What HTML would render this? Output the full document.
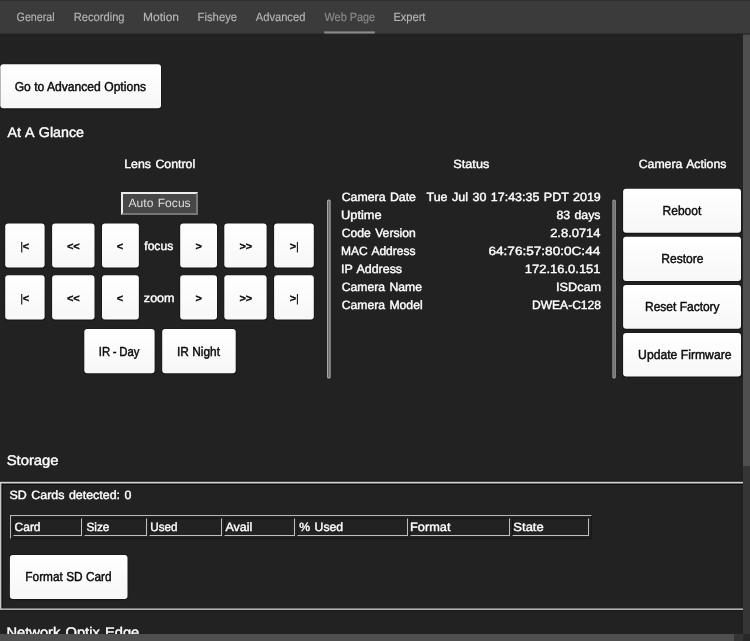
<!DOCTYPE html>
<html><head><meta charset="utf-8"><title>Camera Settings</title>
<style>
html,body{margin:0;padding:0;}
body{width:750px;height:641px;overflow:hidden;background:#222222;position:relative;font-family:"Liberation Sans",sans-serif;}
.t{position:absolute;white-space:nowrap;transform-origin:0 50%;text-rendering:geometricPrecision;}
#tx{position:absolute;left:0;top:0;width:750px;height:641px;will-change:transform;}
.g{position:absolute;width:40px;height:16px;line-height:16px;text-align:center;font-size:11px;font-weight:700;color:#0a0a0a;white-space:nowrap;letter-spacing:-0.3px;-webkit-text-stroke:0.3px;text-rendering:geometricPrecision;}
.g b{font-weight:400;-webkit-text-stroke:0.2px;}
#tabs{position:absolute;left:0;top:0;width:750px;height:33px;background:#3b3b3b;border-top:1px solid #303030;border-bottom:0;box-sizing:border-box;box-shadow:0 1px 0 #2e2e2e;}
#btns{position:absolute;left:0;top:0;}
#vs{position:absolute;left:743px;top:34px;width:7px;height:600px;background:#353535;}
#vt{position:absolute;left:743px;top:34.5px;width:7px;height:431px;background:#4f4f4f;}
#hs{position:absolute;left:0;top:633.5px;width:743px;height:8px;background:#353535;}
#ht{position:absolute;left:0;top:633.5px;width:733.5px;height:8px;background:#4f4f4f;}
#corner{position:absolute;left:743px;top:633.5px;width:7px;height:8px;background:#282828;}
#af{position:absolute;left:121px;top:192px;width:73px;height:18.5px;background:#474747;border:2px solid;border-color:#ececec #777 #777 #ececec;}
#sbox{position:absolute;left:0;top:478px;}
table#tb{position:absolute;left:10px;top:515px;border-collapse:separate;border-spacing:2px;border:1px solid;border-color:#b8b8b8 #161616 #161616 #b8b8b8;}
#tb td{padding:0;height:16px;border:1px solid;border-color:#141414 #c0c0c0 #c0c0c0 #141414;}
</style></head><body>
<div id="tabs"></div>
<svg id="btns" width="750" height="641" viewBox="0 0 750 641"><defs><linearGradient id="bg" x1="0" y1="0" x2="0" y2="1"><stop offset="0" stop-color="#ffffff"/><stop offset="1" stop-color="#f7f7f7"/></linearGradient></defs><rect x="9.10" y="554.30" width="119.20" height="46.00" rx="3.6" fill="#181818"/><rect x="622.30" y="332.30" width="119.50" height="45.70" rx="3.6" fill="#181818"/><rect x="622.30" y="284.30" width="119.50" height="45.85" rx="3.6" fill="#181818"/><rect x="622.30" y="236.20" width="119.50" height="46.10" rx="3.6" fill="#181818"/><rect x="622.30" y="188.20" width="119.50" height="46.00" rx="3.6" fill="#181818"/><rect x="161.40" y="328.40" width="75.10" height="46.20" rx="3.6" fill="#181818"/><rect x="83.50" y="328.40" width="71.90" height="46.20" rx="3.6" fill="#181818"/><rect x="273.30" y="274.70" width="41.30" height="46.20" rx="3.6" fill="#181818"/><rect x="273.30" y="222.80" width="41.30" height="46.20" rx="3.6" fill="#181818"/><rect x="223.50" y="274.70" width="43.90" height="46.20" rx="3.6" fill="#181818"/><rect x="223.50" y="222.80" width="43.90" height="46.20" rx="3.6" fill="#181818"/><rect x="179.40" y="274.70" width="38.40" height="46.20" rx="3.6" fill="#181818"/><rect x="179.40" y="222.80" width="38.40" height="46.20" rx="3.6" fill="#181818"/><rect x="101.20" y="274.70" width="38.45" height="46.20" rx="3.6" fill="#181818"/><rect x="101.20" y="222.80" width="38.45" height="46.20" rx="3.6" fill="#181818"/><rect x="51.30" y="274.70" width="44.00" height="46.20" rx="3.6" fill="#181818"/><rect x="51.30" y="222.80" width="44.00" height="46.20" rx="3.6" fill="#181818"/><rect x="4.40" y="274.70" width="41.00" height="46.20" rx="3.6" fill="#181818"/><rect x="4.40" y="222.80" width="41.00" height="46.20" rx="3.6" fill="#181818"/><rect x="-0.50" y="63.70" width="162.30" height="46.00" rx="3.6" fill="#181818"/><rect x="0.3" y="64.3" width="160.70" height="44.00" rx="3" fill="url(#bg)"/><rect x="5.2" y="223.4" width="39.40" height="44.20" rx="3" fill="url(#bg)"/><rect x="5.2" y="275.3" width="39.40" height="44.20" rx="3" fill="url(#bg)"/><rect x="52.1" y="223.4" width="42.40" height="44.20" rx="3" fill="url(#bg)"/><rect x="52.1" y="275.3" width="42.40" height="44.20" rx="3" fill="url(#bg)"/><rect x="102.0" y="223.4" width="36.85" height="44.20" rx="3" fill="url(#bg)"/><rect x="102.0" y="275.3" width="36.85" height="44.20" rx="3" fill="url(#bg)"/><rect x="180.2" y="223.4" width="36.80" height="44.20" rx="3" fill="url(#bg)"/><rect x="180.2" y="275.3" width="36.80" height="44.20" rx="3" fill="url(#bg)"/><rect x="224.3" y="223.4" width="42.30" height="44.20" rx="3" fill="url(#bg)"/><rect x="224.3" y="275.3" width="42.30" height="44.20" rx="3" fill="url(#bg)"/><rect x="274.1" y="223.4" width="39.70" height="44.20" rx="3" fill="url(#bg)"/><rect x="274.1" y="275.3" width="39.70" height="44.20" rx="3" fill="url(#bg)"/><rect x="84.3" y="329.0" width="70.30" height="44.20" rx="3" fill="url(#bg)"/><rect x="162.2" y="329.0" width="73.50" height="44.20" rx="3" fill="url(#bg)"/><rect x="623.1" y="188.8" width="117.90" height="44.00" rx="3" fill="url(#bg)"/><rect x="623.1" y="236.8" width="117.90" height="44.10" rx="3" fill="url(#bg)"/><rect x="623.1" y="284.9" width="117.90" height="43.85" rx="3" fill="url(#bg)"/><rect x="623.1" y="332.9" width="117.90" height="43.70" rx="3" fill="url(#bg)"/><rect x="9.9" y="554.9" width="117.60" height="44.00" rx="3" fill="url(#bg)"/><rect x="324.2" y="31.4" width="50.6" height="2.1" fill="#8c8c8c"/><rect x="327.1" y="199.4" width="3.50" height="179.2" rx="1.7" fill="#b6b6b6"/><rect x="328.20" y="200.5" width="1.30" height="177" rx="0.6" fill="#585858"/><rect x="612.4" y="199.4" width="3.40" height="179.2" rx="1.7" fill="#a4a4a4"/><rect x="613.50" y="200.5" width="1.20" height="177" rx="0.6" fill="#5c5c5c"/></svg>
<div id="af"></div>
<svg id="sbox" width="750" height="136" viewBox="0 478 750 136">
<rect x="0" y="480.5" width="750" height="1.3" fill="#1c1c1c"/>
<rect x="0" y="481.8" width="750" height="1.9" fill="#d4d4d4"/>
<rect x="1.6" y="483.7" width="750" height="1.2" fill="#0e0e0e"/>
<rect x="0" y="483" width="1.6" height="127" fill="#c6c6c6"/>
<rect x="1.6" y="483.7" width="1.1" height="124.7" fill="#0e0e0e"/>
<rect x="0" y="608.4" width="750" height="1.7" fill="#b0b0b0"/>
<rect x="0" y="610.1" width="750" height="1" fill="#1b1b1b"/>
</svg>
<table id="tb"><tr>
<td style="width:67px"></td><td style="width:61px"></td><td style="width:71px"></td><td style="width:69px"></td><td style="width:108.5px"></td><td style="width:98.5px"></td><td style="width:75px"></td>
</tr></table>
<div id="tx">
<div class="g" style="left:4.5px;top:238.5px"><b>|</b>&lt;</div>
<div class="g" style="left:53.2px;top:238.5px">&lt;&lt;</div>
<div class="g" style="left:99.8px;top:238.5px">&lt;</div>
<div class="g" style="left:178.6px;top:238.5px">&gt;</div>
<div class="g" style="left:225.7px;top:238.5px">&gt;&gt;</div>
<div class="g" style="left:274.2px;top:238.5px">&gt;<b>|</b></div>
<div class="g" style="left:4.5px;top:290.5px"><b>|</b>&lt;</div>
<div class="g" style="left:53.2px;top:290.5px">&lt;&lt;</div>
<div class="g" style="left:99.8px;top:290.5px">&lt;</div>
<div class="g" style="left:178.6px;top:290.5px">&gt;</div>
<div class="g" style="left:225.7px;top:290.5px">&gt;&gt;</div>
<div class="g" style="left:274.2px;top:290.5px">&gt;<b>|</b></div>
<div class="t" style="left:16px;top:10px;font-size:12px;line-height:15px;color:#b6b6b6;-webkit-text-stroke:0.15px;transform:translate(0.58px,0.00px) scaleX(0.8918);">General</div>
<div class="t" style="left:73px;top:10px;font-size:12px;line-height:15px;color:#b6b6b6;-webkit-text-stroke:0.15px;transform:translate(0.66px,0.00px) scaleX(0.9309);">Recording</div>
<div class="t" style="left:142px;top:10px;font-size:12px;line-height:15px;color:#b6b6b6;-webkit-text-stroke:0.15px;transform:translate(0.98px,0.00px) scaleX(0.9994);">Motion</div>
<div class="t" style="left:197px;top:10px;font-size:12px;line-height:15px;color:#b6b6b6;-webkit-text-stroke:0.15px;transform:translate(0.58px,0.00px) scaleX(0.9403);">Fisheye</div>
<div class="t" style="left:255px;top:10px;font-size:12px;line-height:15px;color:#b6b6b6;-webkit-text-stroke:0.15px;transform:translate(0.76px,0.00px) scaleX(0.9291);">Advanced</div>
<div class="t" style="left:324px;top:10px;font-size:12px;line-height:15px;color:#8c8c8c;-webkit-text-stroke:0.15px;transform:translate(0.55px,0.00px) scaleX(0.9055);">Web Page</div>
<div class="t" style="left:393px;top:10px;font-size:12px;line-height:15px;color:#b6b6b6;-webkit-text-stroke:0.15px;transform:translate(0.39px,0.00px) scaleX(0.9242);">Expert</div>
<div class="t" style="left:7px;top:123px;font-size:14px;line-height:18px;color:#ffffff;-webkit-text-stroke:0.4px;word-spacing:1px;transform:translate(0.43px,0.00px) scaleX(1.0187);">At A Glance</div>
<div class="t" style="left:124px;top:157px;font-size:12px;line-height:15px;color:#ffffff;-webkit-text-stroke:0.4px;word-spacing:1px;transform:translate(0.18px,0.00px) scaleX(1.0280);">Lens Control</div>
<div class="t" style="left:453px;top:157px;font-size:12px;line-height:15px;color:#ffffff;-webkit-text-stroke:0.4px;word-spacing:1px;transform:translate(0.37px,0.00px) scaleX(1.0547);">Status</div>
<div class="t" style="left:638px;top:157px;font-size:12px;line-height:15px;color:#ffffff;-webkit-text-stroke:0.4px;word-spacing:1px;transform:translate(0.68px,0.00px) scaleX(1.0239);">Camera Actions</div>
<div class="t" style="left:6px;top:451px;font-size:14px;line-height:18px;color:#ffffff;-webkit-text-stroke:0.4px;word-spacing:1px;transform:translate(0.67px,0.00px) scaleX(1.0589);">Storage</div>
<div class="t" style="left:6px;top:623px;font-size:14px;line-height:18px;color:#ffffff;-webkit-text-stroke:0.4px;word-spacing:1px;transform:translate(0.44px,0.00px) scaleX(1.0498);">Network Optix Edge</div>
<div class="t" style="left:341px;top:190px;font-size:12px;line-height:15px;color:#ffffff;-webkit-text-stroke:0.4px;word-spacing:1px;transform:translate(0.69px,0.00px) scaleX(1.0259);">Camera Date</div>
<div class="t" style="left:426px;top:190px;font-size:12px;line-height:15px;color:#ffffff;-webkit-text-stroke:0.4px;word-spacing:1px;transform:translate(0.52px,0.00px) scaleX(1.0384);">Tue Jul 30 17:43:35 PDT 2019</div>
<div class="t" style="left:340px;top:208px;font-size:12px;line-height:15px;color:#ffffff;-webkit-text-stroke:0.4px;word-spacing:1px;transform:translate(0.99px,0.00px) scaleX(1.0708);">Uptime</div>
<div class="t" style="left:556px;top:208px;font-size:12px;line-height:15px;color:#ffffff;-webkit-text-stroke:0.4px;word-spacing:1px;transform:translate(0.42px,0.00px) scaleX(1.0234);">83 days</div>
<div class="t" style="left:341px;top:226px;font-size:12px;line-height:15px;color:#ffffff;-webkit-text-stroke:0.4px;word-spacing:1px;transform:translate(0.70px,0.00px) scaleX(1.0138);">Code Version</div>
<div class="t" style="left:550px;top:226px;font-size:12px;line-height:15px;color:#ffffff;-webkit-text-stroke:0.4px;word-spacing:1px;transform:translate(0.19px,0.00px) scaleX(1.0760);">2.8.0714</div>
<div class="t" style="left:341px;top:244px;font-size:12px;line-height:15px;color:#ffffff;-webkit-text-stroke:0.4px;word-spacing:1px;transform:translate(0.07px,0.00px) scaleX(1.0005);">MAC Address</div>
<div class="t" style="left:488px;top:244px;font-size:12px;line-height:15px;color:#ffffff;-webkit-text-stroke:0.4px;word-spacing:1px;transform:translate(0.46px,0.00px) scaleX(1.1320);">64:76:57:80:0C:44</div>
<div class="t" style="left:341px;top:262px;font-size:12px;line-height:15px;color:#ffffff;-webkit-text-stroke:0.4px;word-spacing:1px;transform:translate(0.05px,0.00px) scaleX(1.0378);">IP Address</div>
<div class="t" style="left:524px;top:262px;font-size:12px;line-height:15px;color:#ffffff;-webkit-text-stroke:0.4px;word-spacing:1px;transform:translate(0.87px,0.00px) scaleX(1.0795);">172.16.0.151</div>
<div class="t" style="left:341px;top:280px;font-size:12px;line-height:15px;color:#ffffff;-webkit-text-stroke:0.4px;word-spacing:1px;transform:translate(0.70px,0.00px) scaleX(1.0151);">Camera Name</div>
<div class="t" style="left:556px;top:280px;font-size:12px;line-height:15px;color:#ffffff;-webkit-text-stroke:0.4px;word-spacing:1px;transform:translate(0.05px,0.00px) scaleX(1.0561);">ISDcam</div>
<div class="t" style="left:341px;top:298px;font-size:12px;line-height:15px;color:#ffffff;-webkit-text-stroke:0.4px;word-spacing:1px;transform:translate(0.73px,0.00px) scaleX(1.0148);">Camera Model</div>
<div class="t" style="left:531px;top:298px;font-size:12px;line-height:15px;color:#ffffff;-webkit-text-stroke:0.4px;word-spacing:1px;transform:translate(0.97px,0.00px) scaleX(1.0045);">DWEA-C128</div>
<div class="t" style="left:128px;top:196px;font-size:12px;line-height:15px;color:#dedede;word-spacing:1px;transform:translate(0.54px,0.00px) scaleX(1.0064);">Auto Focus</div>
<div class="t" style="left:144px;top:239px;font-size:12px;line-height:15px;color:#ffffff;-webkit-text-stroke:0.4px;word-spacing:1px;transform:translate(0.28px,0.00px) scaleX(1.0084);">focus</div>
<div class="t" style="left:143px;top:291px;font-size:12px;line-height:15px;color:#ffffff;-webkit-text-stroke:0.4px;word-spacing:1px;transform:translate(0.84px,0.00px) scaleX(1.0480);">zoom</div>
<div class="t" style="left:9px;top:488px;font-size:12px;line-height:15px;color:#ffffff;-webkit-text-stroke:0.4px;word-spacing:1px;transform:translate(0.50px,0.00px) scaleX(1.0359);">SD Cards detected: 0</div>
<div class="t" style="left:14px;top:520px;font-size:12px;line-height:15px;color:#ffffff;-webkit-text-stroke:0.4px;word-spacing:1px;transform:translate(0.53px,0.00px) scaleX(1.0004);">Card</div>
<div class="t" style="left:86px;top:520px;font-size:12px;line-height:15px;color:#ffffff;-webkit-text-stroke:0.4px;word-spacing:1px;transform:translate(0.47px,0.00px) scaleX(0.9823);">Size</div>
<div class="t" style="left:150px;top:520px;font-size:12px;line-height:15px;color:#ffffff;-webkit-text-stroke:0.4px;word-spacing:1px;transform:translate(0.27px,0.00px) scaleX(0.9726);">Used</div>
<div class="t" style="left:225px;top:520px;font-size:12px;line-height:15px;color:#ffffff;-webkit-text-stroke:0.4px;word-spacing:1px;transform:translate(0.43px,0.00px) scaleX(1.0393);">Avail</div>
<div class="t" style="left:299px;top:520px;font-size:12px;line-height:15px;color:#ffffff;-webkit-text-stroke:0.4px;word-spacing:1px;transform:translate(0.35px,0.00px) scaleX(1.0178);">% Used</div>
<div class="t" style="left:410px;top:520px;font-size:12px;line-height:15px;color:#ffffff;-webkit-text-stroke:0.4px;word-spacing:1px;transform:translate(0.07px,0.00px) scaleX(1.0636);">Format</div>
<div class="t" style="left:513px;top:520px;font-size:12px;line-height:15px;color:#ffffff;-webkit-text-stroke:0.4px;word-spacing:1px;transform:translate(0.35px,0.00px) scaleX(1.0827);">State</div>
<div class="t" style="left:14px;top:79px;font-size:13px;line-height:16px;color:#0a0a0a;-webkit-text-stroke:0.45px;transform:translate(0.66px,0.00px) scaleX(0.9316);">Go to Advanced Options</div>
<div class="t" style="left:98px;top:344px;font-size:13px;line-height:16px;color:#0a0a0a;-webkit-text-stroke:0.45px;word-spacing:-0.6px;transform:translate(0.83px,0.00px) scaleX(0.8729);">IR - Day</div>
<div class="t" style="left:177px;top:344px;font-size:13px;line-height:16px;color:#0a0a0a;-webkit-text-stroke:0.45px;transform:translate(0.00px,0.00px) scaleX(0.9142);">IR Night</div>
<div class="t" style="left:662px;top:203px;font-size:13px;line-height:16px;color:#0a0a0a;-webkit-text-stroke:0.45px;transform:translate(0.62px,0.00px) scaleX(0.9214);">Reboot</div>
<div class="t" style="left:661px;top:251px;font-size:13px;line-height:16px;color:#0a0a0a;-webkit-text-stroke:0.45px;transform:translate(0.33px,0.00px) scaleX(0.9274);">Restore</div>
<div class="t" style="left:645px;top:299px;font-size:13px;line-height:16px;color:#0a0a0a;-webkit-text-stroke:0.45px;transform:translate(0.04px,0.00px) scaleX(0.9215);">Reset Factory</div>
<div class="t" style="left:638px;top:347px;font-size:13px;line-height:16px;color:#0a0a0a;-webkit-text-stroke:0.45px;transform:translate(0.09px,0.00px) scaleX(0.9368);">Update Firmware</div>
<div class="t" style="left:25px;top:569px;font-size:13px;line-height:16px;color:#0a0a0a;-webkit-text-stroke:0.45px;transform:translate(0.36px,0.00px) scaleX(0.9110);">Format SD Card</div>
</div>
<div id="vs"></div><div id="vt"></div><div id="hs"></div><div id="ht"></div><div id="corner"></div>
</body></html>
